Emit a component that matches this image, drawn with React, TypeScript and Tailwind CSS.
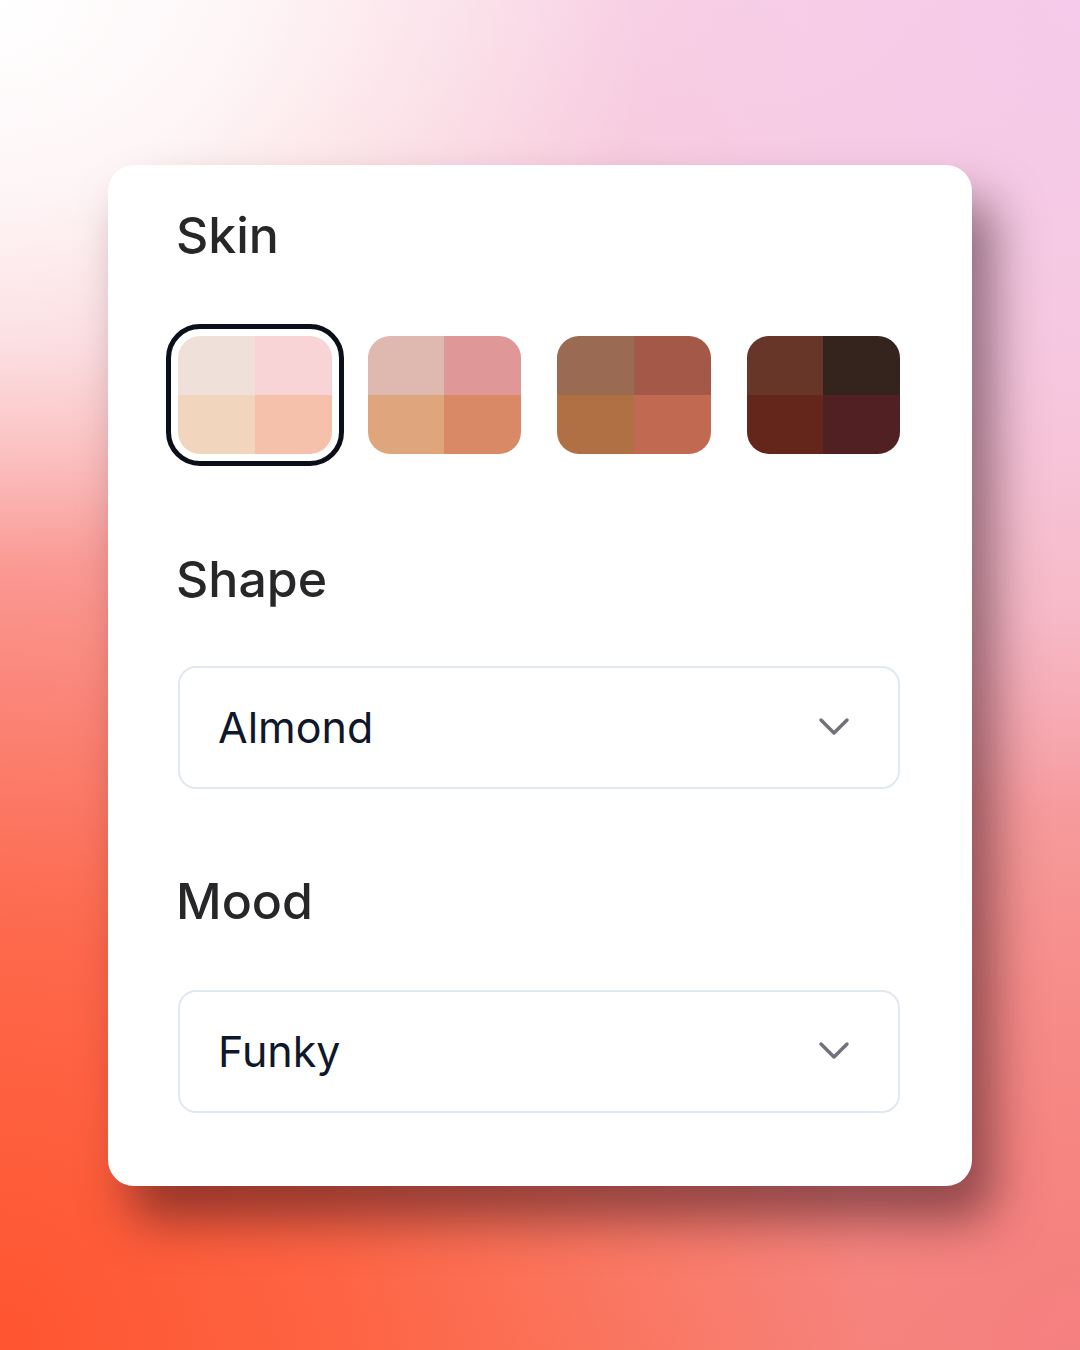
import { useState } from "react";

type Tone = {
  name: string;
  colors: [string, string, string, string];
};

const tones: Tone[] = [
  { name: "Light", colors: ["#efe0da", "#f8d4d6", "#f2d5bd", "#f6c1ab"] },
  { name: "Medium", colors: ["#dfb9b0", "#df9797", "#dfa57c", "#d98966"] },
  { name: "Tan", colors: ["#9b6a52", "#a45847", "#b07044", "#c16a51"] },
  { name: "Deep", colors: ["#673628", "#35241e", "#64251a", "#512023"] },
];

const Chevron = () => (
  <svg width="32" height="20" viewBox="0 0 32 20" fill="none" className="shrink-0">
    <path
      d="M3 3 L16 16 L29 3"
      stroke="#71717a"
      strokeWidth="3.5"
      strokeLinecap="round"
      strokeLinejoin="round"
    />
  </svg>
);

const Select = ({ value }: { value: string }) => (
  <button
    type="button"
    className="flex h-[123px] w-full items-center justify-between rounded-[18px] border-2 border-[#e2e8f0] bg-white pl-[38px] pr-[48px] text-left"
  >
    <span className="text-[43px] leading-none text-[#0f172a]">{value}</span>
    <Chevron />
  </button>
);

const Label = ({ children, className = "" }: { children: string; className?: string }) => (
  <h2 className={`-ml-[2px] text-[50px] font-medium leading-none text-[#27272a] ${className}`}>{children}</h2>
);

export default function App() {
  const [selected, setSelected] = useState(0);

  return (
    <div
      className="flex h-[1350px] w-full items-center justify-center bg-[radial-gradient(ellipse_60%_42%_at_0%_0%,#ffffff_0%,rgba(255,255,255,0.8)_35%,rgba(255,255,255,0)_100%),radial-gradient(ellipse_75%_60%_at_100%_0%,#f5caea_0%,rgba(245,202,234,0.7)_45%,rgba(245,202,234,0)_100%),radial-gradient(ellipse_80%_75%_at_0%_100%,#ff5530_0%,rgba(255,90,55,0.8)_40%,rgba(255,110,80,0)_100%),radial-gradient(ellipse_70%_55%_at_100%_100%,#f58080_0%,rgba(245,128,128,0.6)_45%,rgba(245,128,128,0)_100%),linear-gradient(180deg,#fbd6dc_0%,#f7aab0_55%,#f98a72_100%)]"
      style={{ fontFamily: "Inter, 'Noto Sans', sans-serif" }}
    >
      <div className="w-[864px] rounded-[26px] bg-white pb-[73px] pl-[70px] pr-[72px] pt-[45px] shadow-[22px_34px_48px_rgba(45,12,24,0.5)]">
        <Label>Skin</Label>

        <div className="mt-[76px] grid grid-cols-4 gap-[36px]">
          {tones.map((tone, i) => (
            <button
              key={tone.name}
              type="button"
              aria-label={tone.name}
              onClick={() => setSelected(i)}
              className={`grid h-[118px] grid-cols-2 grid-rows-2 overflow-hidden rounded-[22px] ${
                selected === i ? "outline-[5px] outline-offset-[7px] outline-[#0b0f1a] outline-solid" : ""
              }`}
            >
              {tone.colors.map((c) => (
                <span key={c} className="block h-full w-full" style={{ backgroundColor: c }} />
              ))}
            </button>
          ))}
        </div>

        <Label className="mt-[100px]">Shape</Label>
        <div className="mt-[62px]">
          <Select value="Almond" />
        </div>

        <Label className="mt-[87px]">Mood</Label>
        <div className="mt-[64px]">
          <Select value="Funky" />
        </div>
      </div>
    </div>
  );
}
